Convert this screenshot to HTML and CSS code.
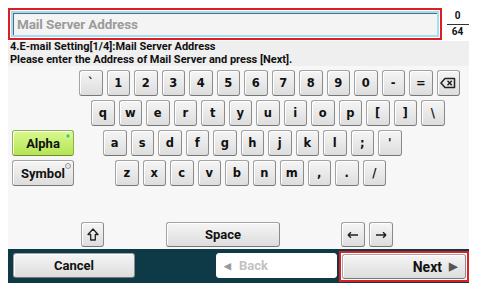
FILE: index.html
```html
<!DOCTYPE html>
<html lang="en">
<head>
  <meta charset="UTF-8" />
  <title>Mail Server Address</title>
  <link rel="stylesheet" href="styles.css">
</head>
<body>
  <div class="screen">
    <div class="top">
      <div class="input-frame">
        <div class="input">Mail Server Address</div>
      </div>
      <div class="counter">
        <span class="num">0</span>
        <span class="den">64</span>
      </div>
    </div>

    <div class="prompt">
      <p>4.E-mail Setting[1/4]:Mail Server Address</p>
      <p>Please enter the Address of Mail Server and press [Next].</p>
    </div>

    <div class="keyboard">
      <div class="row r1">
        <div class="key">`</div><div class="key">1</div><div class="key">2</div><div class="key">3</div>
        <div class="key">4</div><div class="key">5</div><div class="key">6</div><div class="key">7</div>
        <div class="key">8</div><div class="key">9</div><div class="key">0</div><div class="key">-</div>
        <div class="key">=</div>
        <div class="key">
          <svg width="16" height="12" viewBox="0 0 16 12"><path d="M5 1.5 H14.5 V10.5 H5 L1 6 Z" fill="none" stroke="#222" stroke-width="1.5" stroke-linejoin="round"/><path d="M7.5 3.8 L11.8 8.2 M11.8 3.8 L7.5 8.2" stroke="#222" stroke-width="1.5"/></svg>
        </div>
      </div>
      <div class="row r2">
        <div class="key">q</div><div class="key">w</div><div class="key">e</div><div class="key">r</div>
        <div class="key">t</div><div class="key">y</div><div class="key">u</div><div class="key">i</div>
        <div class="key">o</div><div class="key">p</div><div class="key">[</div><div class="key">]</div>
        <div class="key">\</div>
      </div>
      <div class="row r3">
        <div class="mode alpha">Alpha<span class="dot"></span></div>
        <div class="key">a</div><div class="key">s</div><div class="key">d</div><div class="key">f</div>
        <div class="key">g</div><div class="key">h</div><div class="key">j</div><div class="key">k</div>
        <div class="key">l</div><div class="key">;</div><div class="key">'</div>
      </div>
      <div class="row r4">
        <div class="mode symbol">Symbol<span class="dot"></span></div>
        <div class="key">z</div><div class="key">x</div><div class="key">c</div><div class="key">v</div>
        <div class="key">b</div><div class="key">n</div><div class="key">m</div><div class="key">,</div>
        <div class="key">.</div><div class="key">/</div>
      </div>
      <div class="row bottom">
        <div class="key shift">
          <svg width="12" height="13" viewBox="0 0 12 13"><path d="M6 1 L11 6.5 H8.3 V12 H3.7 V6.5 H1 Z" fill="none" stroke="#222" stroke-width="1.3" stroke-linejoin="round"/></svg>
        </div>
        <div class="key space">Space</div>
        <div class="key arrow left">
          <svg width="12" height="8" viewBox="0 0 12 8"><path d="M1 4 H11 M1 4 L4 1.3 M1 4 L4 6.7" stroke="#222" stroke-width="1.5" fill="none"/></svg>
        </div>
        <div class="key arrow">
          <svg width="12" height="8" viewBox="0 0 12 8"><path d="M1 4 H11 M11 4 L8 1.3 M11 4 L8 6.7" stroke="#222" stroke-width="1.5" fill="none"/></svg>
        </div>
      </div>
    </div>

    <div class="footer">
      <div class="btn cancel">Cancel</div>
      <div class="btn back"><span class="tri">&#9664;</span>Back</div>
      <div class="next-frame">
        <div class="btn next">Next<span class="tri">&#9654;</span></div>
      </div>
    </div>
  </div>
</body>
</html>
```

FILE: styles.css
```css
body {
  margin: 0;
  background: #ffffff;
  font-family: Roboto, 'Liberation Sans', sans-serif;
  color: #111;
}
.screen {
  margin: 8px;
  width: 461px;
  height: 275px;
  display: flex;
  flex-direction: column;
  background: #f7f7f7;
}
.top {
  height: 33px;
  display: flex;
  background: #fff;
}
.input-frame {
  width: 434px;
  height: 32px;
  box-sizing: border-box;
  border: 2px solid #dc1f22;
  padding: 1px;
  background: #fff;
}
.input {
  height: 100%;
  box-sizing: border-box;
  border: 2px solid #a9dcef;
  box-shadow: inset 1px 1px 0 #4b6f82;
  background: #f4f4f4;
  color: #9b9b9b;
  font-size: 13.5px;
  font-weight: 700;
  letter-spacing: -0.1px;
  line-height: 22px;
  padding-left: 4px;
}
.counter {
  flex: 1;
  display: flex;
  flex-direction: column;
  align-items: center;
  padding-top: 2px;
  font-size: 10px;
  font-weight: 700;
  line-height: 12px;
}
.counter .num {
  width: 22px;
  text-align: center;
  border-bottom: 1px solid #333;
  padding-bottom: 2px;
  margin-left: 4px;
}
.counter .den {
  margin-left: 4px;
  padding-top: 1px;
}
.prompt {
  height: 25px;
  background: #efefef;
  padding: 0 0 0 2px;
  box-sizing: border-box;
}
.prompt p {
  margin: 0;
  font-size: 11px;
  font-weight: 700;
  line-height: 12.5px;
}
.keyboard {
  flex: 1;
  display: flex;
  flex-direction: column;
  padding: 4px 0 2px;
  gap: 4px;
}
.row {
  display: flex;
  gap: 4px;
  height: 26px;
}
.r1 { padding-left: 71px; }
.r2 { padding-left: 83px; }
.r3, .r4 { padding-left: 4px; }
.r3 .mode { margin-right: 25px; }
.r4 .mode { margin-right: 37px; }
.key, .mode, .btn {
  box-sizing: border-box;
  display: flex;
  align-items: center;
  justify-content: center;
  border: 1px solid #a3a3a3;
  border-bottom-color: #767676;
  border-right-color: #8a8a8a;
  border-radius: 3px;
  background: linear-gradient(#f5f5f5, #dddddd);
  box-shadow: inset 1px 1px 0 #ffffff;
}
.key {
  width: 23.5px;
  font-family: 'DejaVu Sans', sans-serif;
  font-size: 11.5px;
  font-weight: 700;
}
.mode {
  position: relative;
  width: 62px;
  font-size: 13px;
  font-weight: 700;
}
.mode .dot {
  position: absolute;
  top: 2px;
  right: 2px;
  width: 4px;
  height: 4px;
  border-radius: 50%;
  border: 1px solid #9a9a9a;
  background: #e8e8e8;
}
.alpha {
  background: linear-gradient(#d9f88f, #b6e455);
  border-color: #8bb13f;
  border-bottom-color: #6c8c2c;
}
.alpha .dot {
  background: #5fd14a;
  border-color: #e6ffd8;
}
.bottom {
  margin-top: auto;
  height: 25px;
  padding-left: 73px;
}
.bottom .shift { width: 23px; }
.bottom .space {
  width: 114px;
  margin-left: 58px;
  font-family: Roboto, sans-serif;
  font-size: 13px;
}
.bottom .left { margin-left: 57px; }
.bottom .arrow { width: 24px; }
.footer {
  height: 34px;
  box-sizing: border-box;
  background: #0e3947;
  display: flex;
  align-items: flex-start;
  padding: 4px 0 0 5px;
}
.btn {
  height: 25px;
  font-size: 13px;
  font-weight: 700;
}
.cancel { width: 122px; }
.back {
  width: 121px;
  margin-left: 81px;
  background: #fff;
  border-color: #fff;
  box-shadow: none;
  color: #c2c2c2;
  justify-content: flex-start;
  padding-left: 7px;
}
.back .tri {
  font-size: 9px;
  margin-right: 8px;
  color: #9a9a9a;
}
.next-frame {
  margin: -2px 0 0 2px;
  width: 130px;
  height: 31px;
  box-sizing: border-box;
  border: 2px solid #dc1f22;
  padding: 1px;
  background: #fff;
}
.next {
  width: 100%;
  justify-content: flex-end;
  padding-right: 8px;
  font-size: 14px;
}
.next .tri {
  font-size: 11px;
  color: #555;
  margin-left: 7px;
}
```
